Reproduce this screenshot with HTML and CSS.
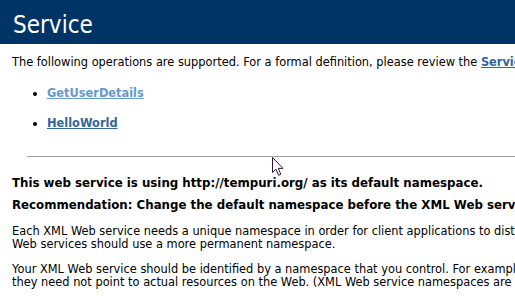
FILE: index.html
```html
<!DOCTYPE html>
<html lang="en">
<head>
    <meta charset="UTF-8">
    <title>Service Web Service</title>
    <link rel="stylesheet" href="styles.css">
</head>
<body>
    <div class="heading1">Service</div>

    <div class="content">
        <p class="intro">The following operations are supported. For a formal definition, please review the <a href="#">Service Description</a>.</p>

        <ul class="ops">
            <li><a href="#" class="visited">GetUserDetails</a></li>
            <li><a href="#">HelloWorld</a></li>
        </ul>

        <hr class="rule">

        <h3>This web service is using http://tempuri.org/ as its default namespace.</h3>
        <h3>Recommendation: Change the default namespace before the XML Web service is made public.</h3>

        <p>Each XML Web service needs a unique namespace in order for client applications to distinguish it from other services on the Web. http://tempuri.org/ is available for XML Web services that are under development, but published XML<br>Web services should use a more permanent namespace.</p>

        <p>Your XML Web service should be identified by a namespace that you control. For example, you can use your company's Internet domain name as part of the namespace. Although many XML Web service namespaces look like URLs,<br>they need not point to actual resources on the Web. (XML Web service namespaces are URIs.)</p>
    </div>

    <svg class="cursor" width="13" height="20" viewBox="0 0 13 20">
        <path d="M0.5 0.5 L0.5 15.5 L4 12.2 L6.6 18.3 L8.8 17.3 L6.3 11.4 L11 11.4 Z" fill="#fff" stroke="#2a1440" stroke-width="1"/>
    </svg>
</body>
</html>
```

FILE: styles.css
```css
body {
    margin: 0;
    background-color: #ffffff;
    color: #000000;
    font-family: 'DejaVu Sans', Verdana, sans-serif;
    overflow: hidden;
    position: relative;
    width: 515px;
    height: 300px;
}
.heading1 {
    background-color: #003366;
    color: #ffffff;
    font-family: 'DejaVu Sans Condensed', 'DejaVu Sans', sans-serif;
    font-size: 24px;
    line-height: 31px;
    height: 31px;
    padding: 10px 0 3px 13px;
    white-space: nowrap;
}
.content {
    padding-left: 12px;
    font-size: 11.4px;
    line-height: 13px;
    white-space: nowrap;
}
a {
    color: #336699;
    font-weight: bold;
    text-decoration: underline;
}
a.visited {
    color: #6699cc;
}
p {
    margin: 0 0 12px;
}
.intro {
    margin-top: 12px;
    margin-bottom: 0;
}
.ops {
    margin: 18px 0 0;
    padding-left: 35px;
    display: flex;
    flex-direction: column;
    gap: 17px;
}
.rule {
    margin: 26px 0 0 15px;
    border: none;
    border-top: 1px solid #a0a0a0;
    height: 0;
}
h3 {
    font-size: 11.8px;
    line-height: 14px;
    margin: 0;
}
h3:first-of-type {
    margin-top: 19px;
}
h3 + h3 {
    margin-top: 8px;
}
h3 + p {
    margin-top: 13px;
}
.cursor {
    position: absolute;
    left: 272px;
    top: 157px;
}
```
